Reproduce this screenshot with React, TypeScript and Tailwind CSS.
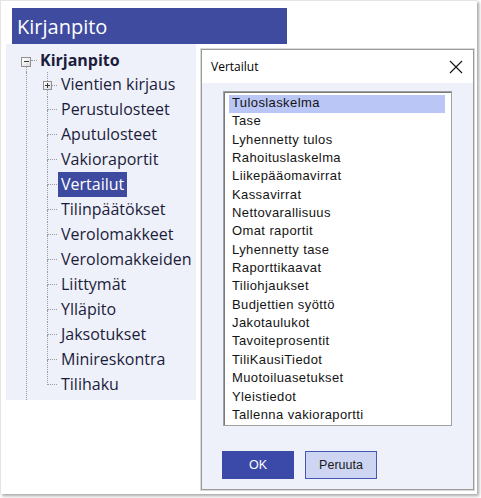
import React from "react";

const children = [
  "Vientien kirjaus",
  "Perustulosteet",
  "Aputulosteet",
  "Vakioraportit",
  "Vertailut",
  "Tilinpäätökset",
  "Verolomakkeet",
  "Verolomakkeiden",
  "Liittymät",
  "Ylläpito",
  "Jaksotukset",
  "Minireskontra",
  "Tilihaku",
];

const reports = [
  "Tuloslaskelma",
  "Tase",
  "Lyhennetty tulos",
  "Rahoituslaskelma",
  "Liikepääomavirrat",
  "Kassavirrat",
  "Nettovarallisuus",
  "Omat raportit",
  "Lyhennetty tase",
  "Raporttikaavat",
  "Tiliohjaukset",
  "Budjettien syöttö",
  "Jakotaulukot",
  "Tavoiteprosentit",
  "TiliKausiTiedot",
  "Muotoiluasetukset",
  "Yleistiedot",
  "Tallenna vakioraportti",
];

function ExpandBox({ open }: { open: boolean }) {
  return (
    <div className="w-[9px] h-[9px] shrink-0 border border-[#919191] bg-gradient-to-br from-white to-[#dcdcdc] flex items-center justify-center relative">
      <div className="w-[5px] h-[1px] bg-[#3a3a3a]" />
      {!open && <div className="absolute w-[1px] h-[5px] bg-[#3a3a3a]" />}
    </div>
  );
}

function TreeRow({ label, index }: { label: string; index: number }) {
  const last = index === children.length - 1;
  const selected = label === "Vertailut";
  return (
    <div className="flex h-[25px]">
      {index === 0 ? (
        <div className="w-[10px] flex flex-col">
          <div className="h-[9px] border-l border-dotted border-[#9a9a9a]" />
          <div className="flex items-center h-[9px]">
            <div className="-ml-[4px]">
              <ExpandBox open={false} />
            </div>
            <div className="flex-1 border-t border-dotted border-[#9a9a9a]" />
          </div>
          <div className="flex-1 border-l border-dotted border-[#9a9a9a]" />
        </div>
      ) : (
        <div className="w-[10px] flex flex-col">
          <div className="h-[13px] border-l border-b border-dotted border-[#9a9a9a]" />
          {!last && <div className="flex-1 border-l border-dotted border-[#9a9a9a]" />}
        </div>
      )}
      <span
        className={
          "ml-[1px] px-[3px] h-[25px] leading-[25px] whitespace-nowrap " +
          (selected ? "bg-[#3d4a9f] text-white" : "")
        }
      >
        {label}
      </span>
    </div>
  );
}

export default function App() {
  return (
    <div className="w-[481px] h-[498px] bg-white">
      <div className="relative w-[477px] h-[494px] bg-white border-l border-t border-[#e4e4e4] shadow-[2px_2px_3px_rgba(0,0,0,0.35)] pt-[7px] pl-[5px]">
        <div className="ml-[6px] w-[275px] h-[36px] bg-[#3f4b9f] flex items-center pl-[5px] pt-[2px]">
          <span className="font-['Open_Sans'] text-[20px] text-white">Kirjanpito</span>
        </div>

        <div className="w-[190px] h-[356px] bg-[#eef1f9] flex flex-col pt-[4px] font-['Open_Sans'] text-[16px] text-[#1c1c3c]">
          <div className="flex h-[24px] pl-[15px]">
            <div className="flex flex-col w-[10px]">
              <div className="h-[8.5px]" />
              <div className="w-[10px] h-[10px] border border-[#919191] bg-gradient-to-br from-white to-[#dcdcdc] flex items-center justify-center">
                <div className="w-[5px] h-[1px] bg-[#3a3a3a]" />
              </div>
              <div className="flex-1 ml-[5px] border-l border-dotted border-[#9a9a9a]" />
            </div>
            <div className="w-[6px] h-[13px] border-b border-dotted border-[#9a9a9a]" />
            <span className="ml-[3px] leading-[24px] font-bold">Kirjanpito</span>
          </div>

          <div className="flex flex-1">
            <div className="ml-[20px] border-l border-dotted border-[#9a9a9a]" />
            <div className="ml-[20px] flex flex-col">
              {children.map((c, i) => (
                <TreeRow key={c} label={c} index={i} />
              ))}
            </div>
          </div>
        </div>

        <div className="absolute left-[200px] top-[48px] w-[273px] h-[441px] border border-[#9b9b9b] shadow-[0_0_0_1px_#dadada] flex flex-col bg-[#eef1f9]">
          <div className="h-[33px] bg-white flex items-center justify-between pl-[9px] pr-[10px]">
            <span className="font-['Open_Sans'] text-[12px] text-black">Vertailut</span>
            <svg width="14" height="14" viewBox="0 0 14 14">
              <path d="M1 1 L13 13 M13 1 L1 13" stroke="#111" strokeWidth="1.1" fill="none" />
            </svg>
          </div>

          <div className="flex-1 flex flex-col pl-[21px] pt-[8px]">
            <div className="w-[229px] h-[335px] bg-white border border-[#a0a0a0] shadow-[inset_1px_1px_0_#7a7a7a] pl-[5px] pr-[6px] pt-[3px] overflow-hidden font-['Liberation_Sans'] text-[13px] tracking-[0.4px] text-[#141414]">
              {reports.map((r, i) => (
                <div
                  key={r}
                  className={
                    "h-[18.35px] leading-[15px] pl-[3px] whitespace-nowrap " +
                    (i === 0 ? "bg-[#bac6f6]" : "")
                  }
                >
                  {r}
                </div>
              ))}
            </div>

            <div className="flex gap-[11px] mt-[25px] -ml-[1px] font-['Liberation_Sans'] text-[12.5px]">
              <button className="w-[72px] h-[28px] bg-[#3b49a9] border border-[#3b49a9] text-white">
                OK
              </button>
              <button className="w-[72px] h-[28px] bg-[#cdd5f2] border border-[#4656b4] text-[#1a1a1a]">
                Peruuta
              </button>
            </div>
          </div>
        </div>
      </div>
    </div>
  );
}
